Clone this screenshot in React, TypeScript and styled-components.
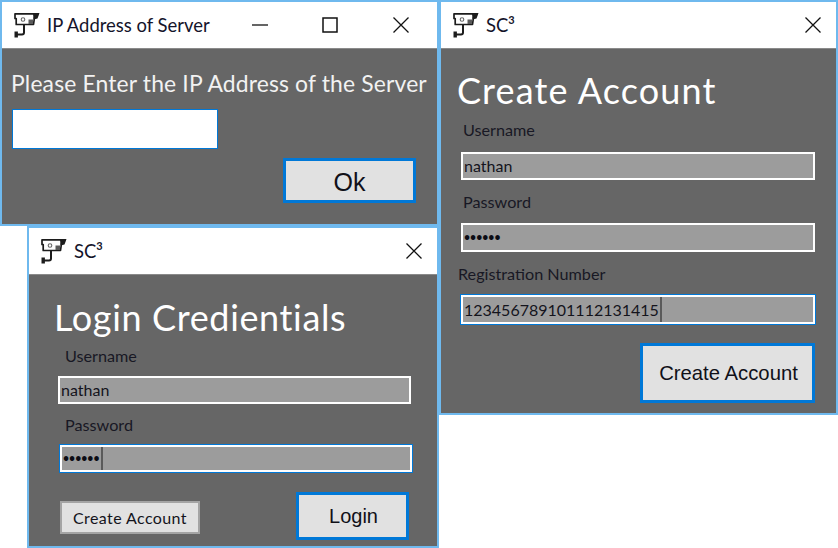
import React from "react";
import styled, { createGlobalStyle } from "styled-components";

const Global = createGlobalStyle`
  html, body { margin: 0; padding: 0; background: #fff; }
  #root { width: 838px; height: 548px; }
`;

const Desktop = styled.div`
  position: relative;
  width: 838px;
  height: 548px;
  overflow: hidden;
  background: #fff;
  font-family: Lato, "Open Sans", sans-serif;
`;

const Win = styled.section<{ $x: number; $y: number; $w: number; $h: number }>`
  position: absolute;
  left: ${(p) => p.$x}px;
  top: ${(p) => p.$y}px;
  width: ${(p) => p.$w}px;
  height: ${(p) => p.$h}px;
  box-sizing: border-box;
  border: 2px solid #6fb9ee;
  display: flex;
  flex-direction: column;
`;

const TitleBar = styled.header`
  flex: 0 0 46px;
  display: flex;
  align-items: center;
  background: #fff;
  border-bottom: 1px solid #8a8a8a;
  padding-left: 10px;
`;

const Title = styled.span`
  margin-left: 7px;
  font-size: 18.45px;
  color: #14142a;
  flex: 1;
  white-space: nowrap;
`;

const Sup = styled.sup`
  font-size: 11px;
  font-weight: 700;
  line-height: 0;
  vertical-align: 8px;
`;

const Ctrl = styled.span<{ $w: number }>`
  flex: 0 0 ${(p) => p.$w}px;
  height: 46px;
  display: flex;
  align-items: center;
  justify-content: center;
  color: #111;
`;

const Body = styled.div`
  flex: 1;
  background: #666;
  display: flex;
  flex-direction: column;
  align-items: flex-start;
  min-height: 0;
`;

const Prompt = styled.div`
  margin: 21px 0 0 9px;
  font-size: 22.9px;
  line-height: 26px;
  color: #f2f2f2;
  white-space: nowrap;
  letter-spacing: 0.15px;
`;

const Heading = styled.h1<{ $top: number; $left: number; $spacing: number }>`
  margin: ${(p) => p.$top}px 0 0 ${(p) => p.$left}px;
  font-size: 36px;
  line-height: 44px;
  font-weight: 400;
  color: #fff;
  white-space: nowrap;
  letter-spacing: ${(p) => p.$spacing}px;
`;

const Label = styled.label<{ $top: number; $left: number }>`
  margin: ${(p) => p.$top}px 0 0 ${(p) => p.$left}px;
  font-size: 16.2px;
  line-height: 20px;
  color: #181824;
  white-space: nowrap;
`;

const Field = styled.div<{ $top: number; $left: number; $w: number; $h: number; $focus?: boolean }>`
  margin: ${(p) => p.$top}px 0 0 ${(p) => p.$left}px;
  width: ${(p) => p.$w}px;
  height: ${(p) => p.$h}px;
  box-sizing: border-box;
  border: 2px solid #fff;
  outline: ${(p) => (p.$focus ? "1px solid #0078d7" : "none")};
  outline-offset: 0;
  background: #9c9c9c;
  display: flex;
  align-items: center;
  padding: 0 0 1px 1px;
  font-size: 16px;
  color: #14141c;
  white-space: nowrap;
`;

const Dots = styled.span`
  font-size: 10.5px;
  font-weight: 700;
  color: #0c0c14;
`;

const Caret = styled.span`
  align-self: stretch;
  margin: 0 0 -1px 1px;
  width: 2px;
  background: #5a5a5a;
`;

const EmptyInput = styled.div`
  margin: 13px 0 0 10px;
  width: 206px;
  height: 40px;
  box-sizing: border-box;
  background: #fff;
  border: 1px solid #0078d7;
`;

const ActionRow = styled.div<{ $top: number; $left: number; $width: number }>`
  margin: ${(p) => p.$top}px 0 0 ${(p) => p.$left}px;
  width: ${(p) => p.$width}px;
  display: flex;
  justify-content: space-between;
  align-items: center;
`;

const PrimaryButton = styled.button<{ $w: number; $h: number; $size: number; $lift?: number }>`
  width: ${(p) => p.$w}px;
  height: ${(p) => p.$h}px;
  box-sizing: border-box;
  padding: ${(p) => p.$lift ?? 0}px 0 0 ${(p) => (p.$lift ? 0 : 2)}px;
  border: 3px solid #0078d7;
  background: #e1e1e1;
  color: #101018;
  font-family: "Liberation Sans", Arial, sans-serif;
  font-size: ${(p) => p.$size}px;
`;

const SecondaryButton = styled.button`
  width: 140px;
  height: 33px;
  margin-top: 3px;
  box-sizing: border-box;
  padding: 0;
  border: 2px solid #a4a4a4;
  background: #e1e1e1;
  color: #14141c;
  font-family: Lato, sans-serif;
  font-size: 16px;
  letter-spacing: 0.4px;
`;

const CameraIcon = () => (
  <svg width="28" height="28" viewBox="0 0 28 28" fill="none">
    <path d="M3 2.8H26L24.5 5.5L22.5 6.5L21.5 13.5H4.2V7.5H3Z" fill="#fff" stroke="#1c1c1c" strokeWidth="1.7" strokeLinejoin="round" />
    <path d="M21 2L27.5 2L25.5 7.5L21.5 8.5Z" fill="#1c1c1c" />
    <path d="M16.5 8.5H21V13H16.5Z" fill="#5a5a5a" />
    <circle cx="11" cy="8.5" r="1.8" stroke="#666" strokeWidth="1.1" />
    <path d="M12 14V21.5Q12 23.5 10 23.5H5" stroke="#1c1c1c" strokeWidth="2" />
    <rect x="2.5" y="20.5" width="3.4" height="6" fill="#1c1c1c" />
  </svg>
);

const CloseIcon = () => (
  <svg width="18" height="18" viewBox="0 0 18 18" fill="none" stroke="#111" strokeWidth="1.3">
    <path d="M1.5 1.5L16.5 16.5M16.5 1.5L1.5 16.5" />
  </svg>
);

const MinIcon = () => (
  <svg width="18" height="18" viewBox="0 0 18 18" fill="none" stroke="#111" strokeWidth="1.3">
    <path d="M1 9H17" />
  </svg>
);

const MaxIcon = () => (
  <svg width="18" height="18" viewBox="0 0 18 18" fill="none" stroke="#111" strokeWidth="1.5">
    <rect x="2" y="2" width="14" height="14" />
  </svg>
);

const SC = () => (
  <Title>
    SC<Sup>3</Sup>
  </Title>
);

export default function App() {
  return (
    <Desktop>
      <Global />
      <Win $x={0} $y={0} $w={439} $h={226}>
        <TitleBar>
          <CameraIcon />
          <Title>IP Address of Server</Title>
          <Ctrl $w={70}><MinIcon /></Ctrl>
          <Ctrl $w={70}><MaxIcon /></Ctrl>
          <Ctrl $w={72}><CloseIcon /></Ctrl>
        </TitleBar>
        <Body>
          <Prompt>Please Enter the IP Address of the Server</Prompt>
          <EmptyInput />
          <ActionRow $top={9} $left={281} $width={133}>
            <PrimaryButton $w={133} $h={45} $size={25} $lift={3}>Ok</PrimaryButton>
          </ActionRow>
        </Body>
      </Win>

      <Win $x={439} $y={0} $w={399} $h={415}>
        <TitleBar>
          <CameraIcon />
          <SC />
          <Ctrl $w={46}><CloseIcon /></Ctrl>
        </TitleBar>
        <Body>
          <Heading $top={19} $left={16} $spacing={1.13}>Create Account</Heading>
          <Label $top={8} $left={22}>Username</Label>
          <Field $top={12} $left={20} $w={354} $h={28}>nathan</Field>
          <Label $top={12} $left={22}>Password</Label>
          <Field $top={11} $left={20} $w={354} $h={29}><Dots>••••••</Dots></Field>
          <Label $top={12} $left={17}>Registration Number</Label>
          <Field $top={11} $left={20} $w={354} $h={29} $focus>
            123456789101112131415
            <Caret />
          </Field>
          <ActionRow $top={19} $left={199} $width={175}>
            <PrimaryButton $w={175} $h={60} $size={20.3}>Create Account</PrimaryButton>
          </ActionRow>
        </Body>
      </Win>

      <Win $x={27} $y={226} $w={412} $h={322}>
        <TitleBar>
          <CameraIcon />
          <SC />
          <Ctrl $w={46}><CloseIcon /></Ctrl>
        </TitleBar>
        <Body>
          <Heading $top={20} $left={25} $spacing={0.65}>Login Credientials</Heading>
          <Label $top={7} $left={36}>Username</Label>
          <Field $top={10} $left={29} $w={353} $h={28}>nathan</Field>
          <Label $top={11} $left={36}>Password</Label>
          <Field $top={10} $left={31} $w={352} $h={27} $focus>
            <Dots>••••••</Dots>
            <Caret />
          </Field>
          <ActionRow $top={20} $left={31} $width={349}>
            <SecondaryButton>Create Account</SecondaryButton>
            <PrimaryButton $w={113} $h={48} $size={20}>Login</PrimaryButton>
          </ActionRow>
        </Body>
      </Win>
    </Desktop>
  );
}
